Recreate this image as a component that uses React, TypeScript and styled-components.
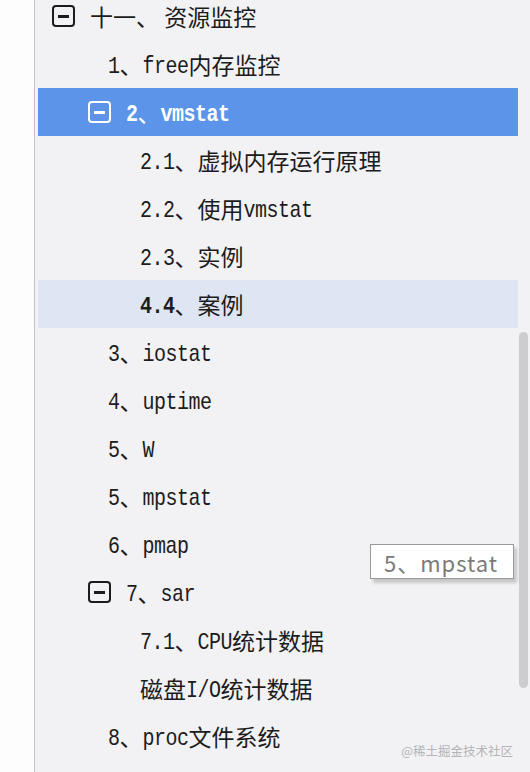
import React from "react";
import styled, { createGlobalStyle, css } from "styled-components";

const Global = createGlobalStyle`
  html, body { margin: 0; padding: 0; background: #ffffff; }
  #root { width: 530px; height: 772px; }
`;

const Frame = styled.div`
  position: relative;
  display: flex;
  width: 530px;
  height: 772px;
  overflow: hidden;
`;

const Gutter = styled.div`
  width: 34px;
  flex: none;
  background: #fdfdfd;
`;

const Panel = styled.div`
  flex: 1;
  display: flex;
  background: #f2f2f4;
  border-left: 1px solid #c4c4c6;
  padding-left: 3px;
`;

const List = styled.div`
  flex: 1;
  display: flex;
  flex-direction: column;
  margin-top: -8px;
`;

type RowState = "normal" | "selected" | "hover";

const Row = styled.div<{ $indent: number; $state: RowState }>`
  height: 48px;
  flex: none;
  display: flex;
  align-items: center;
  padding-left: ${(p) => p.$indent}px;
  color: #1c1c1c;
  font-family: "Noto Sans CJK SC", sans-serif;
  font-size: 23px;
  white-space: nowrap;
  ${(p) =>
    p.$state === "selected" &&
    css`
      background: #5b94e9;
      color: #ffffff;
    `}
  ${(p) =>
    p.$state === "hover" &&
    css`
      background: #dfe6f3;
    `}
`;

const Text = styled.span`
  display: inline-flex;
  align-items: center;
  line-height: 1;
`;

const Toggle = styled.span`
  box-sizing: border-box;
  width: 23px;
  height: 22px;
  margin-right: 15px;
  border: 2px solid currentColor;
  border-radius: 4px;
  display: flex;
  align-items: center;
  justify-content: center;
  flex: none;
`;

const Minus = styled.span`
  width: 11px;
  height: 3px;
  background: currentColor;
`;

const Mono = styled.span<{ $bold?: boolean }>`
  display: inline-block;
  font-family: "Liberation Mono", monospace;
  font-size: 20px;
  line-height: 1;
  letter-spacing: -0.5px;
  transform: translateY(2.5px) scaleY(1.22);
  font-weight: ${(p) => (p.$bold ? 700 : 400)};
`;

const ScrollTrack = styled.div`
  width: 9px;
  flex: none;
  margin: 0 2px 0 1px;
  display: flex;
  flex-direction: column;
`;

const ScrollThumb = styled.div`
  margin-top: 332px;
  height: 356px;
  border-radius: 5px;
  background: #cdcdcf;
`;

const Tooltip = styled.div`
  position: absolute;
  left: 370px;
  top: 544px;
  width: 144px;
  height: 35px;
  box-sizing: border-box;
  padding-left: 13px;
  display: flex;
  align-items: center;
  background: #ffffff;
  border: 1px solid #9a9a9a;
  box-shadow: 3px 4px 3px rgba(0, 0, 0, 0.18);
  font-family: "Noto Sans CJK SC", sans-serif;
  font-size: 22px;
  letter-spacing: 1px;
  color: #7a7a7a;
  white-space: nowrap;
`;

const Watermark = styled.div`
  position: absolute;
  right: 17px;
  top: 741px;
  font-family: "Noto Sans CJK SC", sans-serif;
  font-size: 12.5px;
  color: #b4b4b6;
  white-space: nowrap;
`;

type Item = {
  label: string;
  indent: number;
  toggle?: boolean;
  state?: RowState;
  bold?: boolean;
};

const items: Item[] = [
  { label: "十一、 资源监控", indent: 14, toggle: true },
  { label: "1、free内存监控", indent: 70 },
  { label: "2、vmstat", indent: 50, toggle: true, state: "selected", bold: true },
  { label: "2.1、虚拟内存运行原理", indent: 102 },
  { label: "2.2、使用vmstat", indent: 102 },
  { label: "2.3、实例", indent: 102 },
  { label: "4.4、案例", indent: 102, state: "hover", bold: true },
  { label: "3、iostat", indent: 70 },
  { label: "4、uptime", indent: 70 },
  { label: "5、W", indent: 70 },
  { label: "5、mpstat", indent: 70 },
  { label: "6、pmap", indent: 70 },
  { label: "7、sar", indent: 50, toggle: true },
  { label: "7.1、CPU统计数据", indent: 102 },
  { label: "磁盘I/O统计数据", indent: 102 },
  { label: "8、proc文件系统", indent: 70 },
];

function Label({ text, bold }: { text: string; bold?: boolean }) {
  const parts = text.split(/([A-Za-z0-9.\/]+)/).filter((s) => s.length > 0);
  return (
    <Text>
      {parts.map((part, i) =>
        /^[A-Za-z0-9.\/]+$/.test(part) ? (
          <Mono key={i} $bold={bold}>
            {part}
          </Mono>
        ) : (
          <span key={i}>{part}</span>
        )
      )}
    </Text>
  );
}

export default function App() {
  return (
    <>
      <Global />
      <Frame>
        <Gutter />
        <Panel>
          <List>
            {items.map((it, i) => (
              <Row key={i} $indent={it.indent} $state={it.state ?? "normal"}>
                {it.toggle && (
                  <Toggle>
                    <Minus />
                  </Toggle>
                )}
                <Label text={it.label} bold={it.bold} />
              </Row>
            ))}
          </List>
          <ScrollTrack>
            <ScrollThumb />
          </ScrollTrack>
        </Panel>
        <Tooltip>5、mpstat</Tooltip>
        <Watermark>@稀土掘金技术社区</Watermark>
      </Frame>
    </>
  );
}
